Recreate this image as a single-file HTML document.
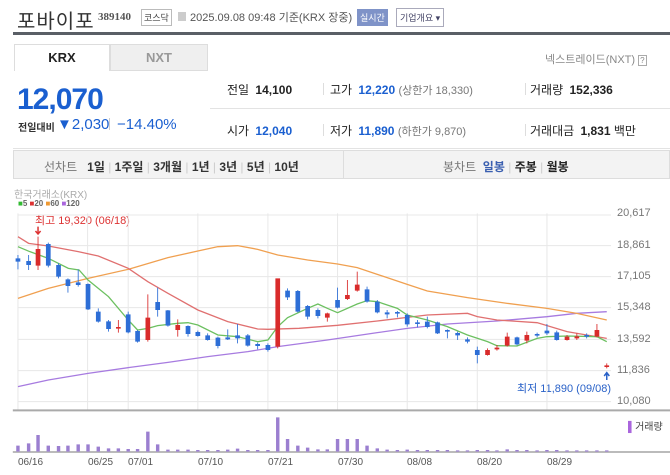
<!DOCTYPE html>
<html><head><meta charset="utf-8"><style>
*{margin:0;padding:0;box-sizing:border-box}
body{width:670px;height:475px;background:#fff;font-family:"Liberation Sans","Noto Sans CJK KR",sans-serif;position:relative;overflow:hidden;color:#222}
.a{position:absolute;white-space:nowrap}
.b{color:#1a5fd0}
.g{color:#777}
.k{font-weight:bold}
</style></head><body>
<div class="a" style="left:17px;top:5px;font-size:20px;color:#333;letter-spacing:1px">포바이포</div>
<div class="a k" style="left:98px;top:11px;font-size:11px;color:#555;font-family:'Liberation Serif',serif">389140</div>
<div class="a" style="left:141px;top:9px;font-size:9px;border:1px solid #bbb;padding:1px 2px;color:#444">코스닥</div>
<div class="a" style="left:178px;top:12px;width:8px;height:9px;background:#ccc"></div>
<div class="a" style="left:190px;top:9px;font-size:11px;color:#555">2025.09.08 09:48 기준(KRX 장중)</div>
<div class="a" style="left:357px;top:9px;font-size:9px;background:#7f93c8;color:#fff;padding:2px 3px">실시간</div>
<div class="a" style="left:396px;top:8px;font-size:9px;border:1px solid #aab;color:#446;padding:2px 3px">기업개요 ▾</div>
<div class="a" style="left:13px;top:32px;width:657px;height:3px;background:#5a5f66"></div>
<div class="a" style="left:14px;top:44px;width:96px;height:27px;border:1px solid #ddd;border-bottom:none;background:#fff;text-align:center;line-height:26px;font-size:13px;font-weight:bold">KRX</div>
<div class="a" style="left:110px;top:44px;width:98px;height:27px;background:#efefef;border:1px solid #ddd;text-align:center;line-height:26px;font-size:13px;font-weight:bold;color:#999">NXT</div>
<div class="a" style="left:545px;top:51px;font-size:11px;color:#888">넥스트레이드(NXT) <span style="border:1px solid #aaa;font-size:8px;padding:0 1px">?</span></div>
<div class="a k b" style="left:17px;top:83px;font-size:30px;letter-spacing:-1px">12,070</div>
<div class="a" style="left:18px;top:119px;font-size:10px;color:#333;font-weight:bold">전일대비</div>
<div class="a b" style="left:57px;top:116px;font-size:15px">▼2,030</div>
<div class="a" style="left:109px;top:118px;width:1px;height:12px;background:#ccc"></div>
<div class="a b" style="left:117px;top:116px;font-size:15px">−14.40%</div>
<div class="a" style="left:210px;top:108px;width:460px;height:1px;background:#e3e3e3"></div>
<div class="a" style="left:13px;top:148px;width:657px;height:1px;background:#e3e3e3"></div>
<div class="a" style="left:227px;top:81px;font-size:12px">전일 <span class="k" style="margin-left:3px">14,100</span></div>
<div class="a" style="left:323px;top:83px;width:1px;height:12px;background:#ddd"></div>
<div class="a" style="left:330px;top:81px;font-size:12px">고가 <span class="b k" style="margin-left:3px">12,220</span> <span class="g" style="font-size:11px">(상한가 18,330)</span></div>
<div class="a" style="left:525px;top:83px;width:1px;height:12px;background:#ddd"></div>
<div class="a" style="left:530px;top:81px;font-size:12px">거래량 <span class="k" style="margin-left:3px">152,336</span></div>
<div class="a" style="left:227px;top:122px;font-size:12px">시가 <span class="b k" style="margin-left:3px">12,040</span></div>
<div class="a" style="left:323px;top:124px;width:1px;height:12px;background:#ddd"></div>
<div class="a" style="left:330px;top:122px;font-size:12px">저가 <span class="b k" style="margin-left:3px">11,890</span> <span class="g" style="font-size:11px">(하한가 9,870)</span></div>
<div class="a" style="left:525px;top:124px;width:1px;height:12px;background:#ddd"></div>
<div class="a" style="left:530px;top:122px;font-size:12px">거래대금 <span class="k" style="margin-left:3px">1,831</span> 백만</div>
<div class="a" style="left:13px;top:150px;width:657px;height:29px;background:#f3f3f3;border:1px solid #ddd"></div>
<div class="a" style="left:343px;top:151px;width:1px;height:27px;background:#ddd"></div>
<div class="a" style="left:44px;top:158px;font-size:12px;color:#333"><span class="g">선차트</span>&nbsp;&nbsp; <b>1일</b> <span style="color:#ccc">|</span> <b>1주일</b> <span style="color:#ccc">|</span> <b>3개월</b> <span style="color:#ccc">|</span> <b>1년</b> <span style="color:#ccc">|</span> <b>3년</b> <span style="color:#ccc">|</span> <b>5년</b> <span style="color:#ccc">|</span> <b>10년</b></div>
<div class="a" style="left:443px;top:158px;font-size:12px"><span class="g">봉차트</span>&nbsp; <b style="color:#3a5fb0">일봉</b> <span style="color:#ccc">|</span> <b>주봉</b> <span style="color:#ccc">|</span> <b>월봉</b></div>
<div class="a" style="left:14px;top:186px;font-size:10px;color:#aaa">한국거래소(KRX)</div>
<div class="a" style="left:18px;top:199px;font-size:8px;font-weight:bold;color:#666"><span style="color:#3b3">■</span>5 <span style="color:#d33">■</span>20 <span style="color:#e93">■</span>60 <span style="color:#a6d">■</span>120</div>
<div class="a" style="left:35px;top:212px;font-size:11px;color:#d33">최고 19,320 (06/18)</div>
<div class="a" style="left:517px;top:380px;font-size:11px;color:#2a62c8">최저 11,890 (09/08)</div>
<div class="a" style="left:628px;top:418px;font-size:10px;color:#444"><span style="color:#a6d">▌</span>거래량</div>
<div class="a" style="left:617px;top:208px;font-size:11px;color:#777;line-height:11px">20,617</div>
<div class="a" style="left:617px;top:240px;font-size:11px;color:#777;line-height:11px">18,861</div>
<div class="a" style="left:617px;top:271px;font-size:11px;color:#777;line-height:11px">17,105</div>
<div class="a" style="left:617px;top:302px;font-size:11px;color:#777;line-height:11px">15,348</div>
<div class="a" style="left:617px;top:334px;font-size:11px;color:#777;line-height:11px">13,592</div>
<div class="a" style="left:617px;top:365px;font-size:11px;color:#777;line-height:11px">11,836</div>
<div class="a" style="left:617px;top:396px;font-size:11px;color:#777;line-height:11px">10,080</div>
<div class="a" style="top:457px;left:0;width:670px;font-size:10px;color:#555">
<span class="a" style="left:18px">06/16</span><span class="a" style="left:88px">06/25</span><span class="a" style="left:128px">07/01</span><span class="a" style="left:198px">07/10</span><span class="a" style="left:268px">07/21</span><span class="a" style="left:338px">07/30</span><span class="a" style="left:407px">08/08</span><span class="a" style="left:477px">08/20</span><span class="a" style="left:547px">08/29</span></div>
<svg class="a" style="left:0;top:180px" width="670" height="295" viewBox="0 0 1568 885" preserveAspectRatio="none">
<path vector-effect="non-scaling-stroke" stroke="#e8e8e8" fill="none" d="M42 105H1430M42 197H1430M42 290H1430M42 383H1430M42 478H1430M42 572H1430M42 665H1430M42 100V690M205 100V690M300 100V690M463 100V690M627 100V690M790 100V690M953 100V690M1117 100V690M1280 100V690"/>
<path d="M30 691H1568" stroke="#aaa" stroke-width="2" vector-effect="non-scaling-stroke"/>
<path d="M30 816H1568" stroke="#bbb" stroke-width="2" vector-effect="non-scaling-stroke"/>
<g fill="none" stroke-width="1.3">
<path vector-effect="non-scaling-stroke" stroke="#a77be0" d="M42 620L113 600L206 580L300 563L393 547L486 530L580 515L650 500L766 480L883 458L953 445L1047 432L1163 423L1280 410L1350 400L1420 395"/>
<path vector-effect="non-scaling-stroke" stroke="#f0a050" d="M42 355L113 325L206 295L300 268L393 233L463 213L510 200L556 197L603 208L650 225L720 240L790 252L836 263L883 283L953 313L1000 333L1094 353L1187 370L1280 385L1350 400L1420 420"/>
<path vector-effect="non-scaling-stroke" stroke="#e07070" d="M42 170L67 190L113 198L183 215L230 228L300 265L346 305L393 340L463 390L533 425L603 447L627 448L700 445L790 436L883 423L953 412L1000 405L1094 400L1117 410L1163 420L1257 428L1327 455L1373 465L1420 475"/>
<path vector-effect="non-scaling-stroke" stroke="#6cc060" d="M42 200L70 215L113 235L160 265L185 270L206 300L254 350L300 420L322 450L346 445L369 437L416 430L440 428L463 435L510 465L556 470L603 485L627 480L650 440L673 413L720 385L744 372L766 385L790 398L836 372L859 362L883 365L930 385L953 405L1000 420L1047 440L1094 465L1141 485L1163 497L1210 498L1257 475L1280 470L1327 468L1397 470L1420 485"/>
</g>
<path fill="#2d6ed6" d="
M41 225h2V268h-2zM36.5 235h11V245h-11z
M66 225h2V270h-2zM61.5 243h11V255h-11z
M112 188h2V262h-2zM107.5 192h11V257h-11z
M136 250h2V295h-2zM131.5 255h11V290h-11z
M158 295h2V338h-2zM153.5 298h11V318h-11z
M182 268h2V320h-2zM177.5 307h11V315h-11z
M205 310h2V390h-2zM200.5 312h11V388h-11z
M229 385h2V428h-2zM224.5 395h11V425h-11z
M253 420h2V455h-2zM248.5 424h11V447h-11z
M299 395h2V460h-2zM294.5 403h11V457h-11z
M321 450h2V488h-2zM316.5 453h11V485h-11z
M368 323h2V410h-2zM363.5 366h11V390h-11z
M392 390h2V440h-2zM387.5 391h11V437h-11z
M439 436h2V470h-2zM434.5 438h11V462h-11z
M462 452h2V470h-2zM457.5 456h11V468h-11z
M485 460h2V482h-2zM480.5 466h11V480h-11z
M509 470h2V505h-2zM504.5 473h11V498h-11z
M532 448h2V480h-2zM527.5 472h11V478h-11z
M555 432h2V490h-2zM550.5 466h11V475h-11z
M579 462h2V500h-2zM574.5 466h11V497h-11z
M602 488h2V508h-2zM597.5 492h11V498h-11z
M626 490h2V515h-2zM621.5 495h11V510h-11z
M672 325h2V360h-2zM667.5 332h11V352h-11z
M696 330h2V398h-2zM691.5 333h11V395h-11z
M719 375h2V418h-2zM714.5 378h11V410h-11z
M743 385h2V415h-2zM738.5 390h11V408h-11z
M789 323h2V385h-2zM784.5 360h11V383h-11z
M858 320h2V368h-2zM853.5 328h11V365h-11z
M882 360h2V400h-2zM877.5 365h11V397h-11z
M905 390h2V415h-2zM900.5 397h11V403h-11z
M929 393h2V412h-2zM924.5 396h11V401h-11z
M952 400h2V440h-2zM947.5 405h11V433h-11z
M976 420h2V442h-2zM971.5 427h11V432h-11z
M999 410h2V445h-2zM994.5 425h11V441h-11z
M1023 425h2V462h-2zM1018.5 427h11V460h-11z
M1046 448h2V475h-2zM1041.5 450h11V455h-11z
M1070 455h2V480h-2zM1065.5 459h11V466h-11z
M1093 472h2V490h-2zM1088.5 478h11V485h-11z
M1116 500h2V550h-2zM1111.5 510h11V525h-11z
M1209 470h2V496h-2zM1204.5 472h11V493h-11z
M1256 458h2V472h-2zM1251.5 462h11V467h-11z
M1279 432h2V465h-2zM1274.5 452h11V460h-11z
M1302 452h2V482h-2zM1297.5 457h11V480h-11z
M1372 460h2V475h-2zM1367.5 465h11V470h-11z"/>
<path fill="#d92b2b" d="
M88 170h2V270h-2zM83.5 207h11V257h-11z
M276 420h2V458h-2zM271.5 441h11V446h-11z
M345 343h2V485h-2zM340.5 413h11V480h-11z
M415 418h2V470h-2zM410.5 435h11V450h-11z
M649 295h2V505h-2zM644.5 295h11V500h-11z
M765 398h2V425h-2zM760.5 400h11V413h-11z
M812 300h2V360h-2zM807.5 345h11V357h-11z
M835 275h2V335h-2zM830.5 314h11V332h-11z
M1140 505h2V527h-2zM1135.5 510h11V525h-11z
M1162 495h2V512h-2zM1157.5 503h11V508h-11z
M1186 458h2V500h-2zM1181.5 470h11V497h-11z
M1232 455h2V490h-2zM1227.5 465h11V482h-11z
M1326 465h2V482h-2zM1321.5 470h11V480h-11z
M1349 460h2V480h-2zM1344.5 469h11V475h-11z
M1396 432h2V472h-2zM1391.5 450h11V470h-11z
M1419 550h2V565h-2zM1414.5 556h11V561h-11z"/>
<path fill="#9b7fd0" d="
M38 797h8V815h-8zM63 790h8V815h-8zM85 765h8V815h-8zM109 797h8V815h-8zM133 798h8V815h-8zM155 797h8V815h-8zM179 793h8V815h-8zM202 793h8V815h-8zM226 800h8V815h-8zM250 805h8V815h-8zM273 805h8V815h-8zM296 807h8V815h-8zM318 807h8V815h-8zM342 755h8V815h-8zM365 793h8V815h-8z
M389 809h8V815h-8zM412 809h8V815h-8zM436 809h8V815h-8zM459 810h8V815h-8zM482 810h8V815h-8zM506 810h8V815h-8zM529 809h8V815h-8zM552 806h8V815h-8zM576 810h8V815h-8zM599 810h8V815h-8zM623 810h8V815h-8z
M646 712h8V815h-8zM669 777h8V815h-8zM693 797h8V815h-8zM716 803h8V815h-8zM740 808h8V815h-8zM762 808h8V815h-8zM786 777h8V815h-8zM809 777h8V815h-8zM832 777h8V815h-8zM855 797h8V815h-8zM879 805h8V815h-8z
M902 809h8V815h-8zM926 810h8V815h-8zM949 809h8V815h-8zM973 810h8V815h-8zM996 810h8V815h-8zM1020 810h8V815h-8zM1043 810h8V815h-8zM1067 811h8V815h-8zM1090 811h8V815h-8zM1113 810h8V815h-8zM1137 810h8V815h-8zM1159 811h8V815h-8zM1183 808h8V815h-8zM1206 810h8V815h-8zM1229 810h8V815h-8zM1253 811h8V815h-8zM1276 810h8V815h-8zM1299 810h8V815h-8zM1323 811h8V815h-8zM1346 811h8V815h-8zM1369 811h8V815h-8zM1393 811h8V815h-8zM1416 811h8V815h-8z"/>
<path d="M89 140V160M83 153L89 162L95 153" stroke="#d33" fill="none" stroke-width="1.5" vector-effect="non-scaling-stroke"/>
<path d="M1420 600V580M1414 588L1420 578L1426 588" stroke="#2a62c8" fill="none" stroke-width="1.5" vector-effect="non-scaling-stroke"/>
</svg>
</body></html>
